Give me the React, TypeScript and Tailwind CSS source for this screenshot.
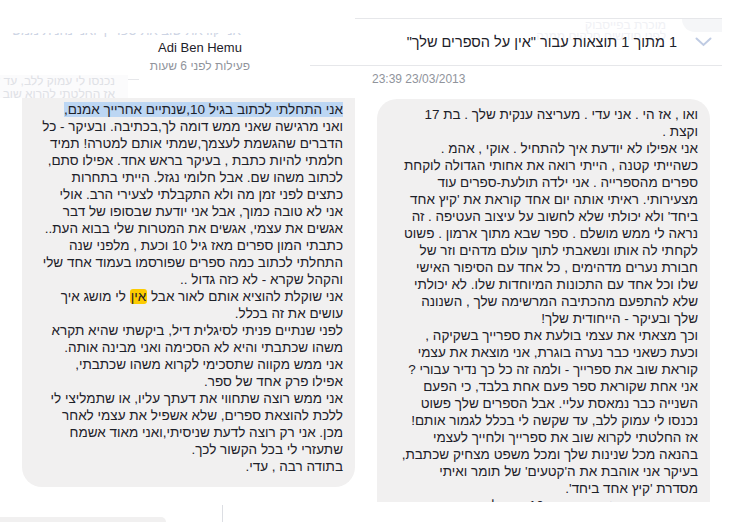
const leftLines = [
  "אני התחלתי לכתוב בגיל 10,שנתיים אחרייך אמנם,",
  "ואני מרגישה שאני ממש דומה לך,בכתיבה. ובעיקר - כל",
  "הדברים שהגשמת לעצמך,שמתי אותם למטרה! תמיד",
  "חלמתי להיות כתבת , בעיקר בראש אחד. אפילו סתם,",
  "לכתוב משהו שם. אבל חלומי נגזל. הייתי בתחרות",
  "כתצים לפני זמן מה ולא התקבלתי לצעירי הרב. אולי",
  "אני לא טובה כמוך, אבל אני יודעת שבסופו של דבר",
  "אגשים את עצמי, אגשים את המטרות שלי בבוא העת..",
  "כתבתי המון ספרים מאז גיל 10 וכעת , מלפני שנה",
  "התחלתי לכתוב כמה ספרים שפורסמו בעמוד אחד שלי",
  "והקהל שקרא - לא כזה גדול ..",
  "HIGHLIGHT",
  "עושים את זה בכלל.",
  "לפני שנתיים פניתי לסיגלית דיל, ביקשתי שהיא תקרא",
  "משהו שכתבתי והיא לא הסכימה ואני מבינה אותה.",
  "אני ממש מקווה שתסכימי לקרוא משהו שכתבתי,",
  "אפילו פרק אחד של ספר.",
  "אני ממש רוצה שתחווי את דעתך עליו, או שתמליצי לי",
  "ללכת להוצאת ספרים, שלא אשפיל את עצמי לאחר",
  "מכן. אני רק רוצה לדעת שניסיתי,ואני מאוד אשמח",
  "שתעזרי לי בכל הקשור לכך.",
  "בתודה רבה , עדי.",
];

const rightLines = [
  "ואו , אז הי . אני עדי . מעריצה ענקית שלך . בת 17",
  "וקצת .",
  "אני אפילו לא יודעת איך להתחיל . אוקי , אהמ .",
  "כשהייתי קטנה , הייתי רואה את אחותי הגדולה לוקחת",
  "ספרים מהספרייה . אני ילדה תולעת-ספרים עוד",
  "מצעירותי. ראיתי אותה יום אחד קוראת את 'קיץ אחד",
  "ביחד' ולא יכולתי שלא לחשוב על עיצוב העטיפה . זה",
  "נראה לי ממש מושלם . ספר שבא מתוך ארמון . פשוט",
  "לקחתי לה אותו ונשאבתי לתוך עולם מדהים וזר של",
  "חבורת נערים מדהימים , כל אחד עם הסיפור האישי",
  "שלו וכל אחד עם התכונות המיוחדות שלו. לא יכולתי",
  "שלא להתפעם מהכתיבה המרשימה שלך , השנונה",
  "שלך ובעיקר - הייחודית שלך!",
  "וכך מצאתי את עצמי בולעת את ספרייך בשקיקה ,",
  "וכעת כשאני כבר נערה בוגרת, אני מוצאת את עצמי",
  "קוראת שוב את ספרייך - ולמה זה כל כך נדיר עבורי ?",
  "אני אחת שקוראת ספר פעם אחת בלבד, כי הפעם",
  "השנייה כבר נמאסת עליי. אבל הספרים שלך פשוט",
  "נכנסו לי עמוק ללב, עד שקשה לי בכלל לגמור אותם!",
  "אז החלטתי לקרוא שוב את ספרייך ולחייך לעצמי",
  "בהנאה מכל שנינות שלך ומכל משפט מצחיק שכתבת,",
  "בעיקר אני אוהבת את ה'קטעים' של תומר ואיתי",
  "מסדרת 'קיץ אחד ביחד'.",
  "ואני כותבת מאז שהייתי בת 10 ועוד לא",
];

function Chevron() {
  return (
    <svg width="17" height="10" viewBox="0 0 17 10" fill="none">
      <path d="M1.5 1.5 L8.5 8 L15.5 1.5" stroke="#bfcbe3" strokeWidth="2" strokeLinecap="round" />
    </svg>
  );
}

export default function App() {
  return (
    <div className="relative flex h-[522px] w-[730px] overflow-hidden bg-white font-['Liberation_Sans',Arial,sans-serif] text-[#1d2129]">
      {/* left column */}
      <div className="flex w-[365px] flex-col">
        <div className="h-[81px] w-[310px] border-b border-[#e6e7ea] pt-[33px]">
          <div className="flex h-[4px] items-start overflow-hidden pl-[3px]">
            <span className="-mt-[9px] text-[13px] leading-[14px] text-[#c8265a]">"</span>
            <span className="-mt-[9px] ml-[4px] whitespace-nowrap text-[13px] leading-[14px] text-[#cdd4e4]" dir="rtl">
              אני קוראת שוב את ספרייך ואני נהנית ממש
            </span>
          </div>
        </div>
        <div className="-mt-[5px] h-[24px] w-[128px] overflow-hidden bg-[#fbfbfc] pr-[13px] text-[12px] leading-[13px] text-[#dfe1e6]" dir="rtl">
          <div className="whitespace-nowrap">נכנסו לי עמוק ללב, עד שקשה לי בכלל</div>
          <div className="whitespace-nowrap">אז החלטתי להרוא שוב את ספרייך</div>
        </div>

        <div className="ml-[22px] w-[333px] rounded-b-[20px] bg-[#f1f0f0] px-[12px] pb-[12px] pt-[3px] text-[13.5px] leading-[17px]" dir="rtl">
          {leftLines.map((line, i) =>
            line === "HIGHLIGHT" ? (
              <div key={i} className="whitespace-nowrap">
                אני שוקלת להוציא אותם לאור אבל{" "}
                <span className="rounded-[3px] bg-[#fccb00] px-[1px]">אין</span> לי מושג איך
              </div>
            ) : i === 0 ? (
              <div key={i} className="whitespace-nowrap">
                <span className="bg-[#bcd6f3]">{line}</span>
              </div>
            ) : (
              <div key={i} className="whitespace-nowrap">
                {line}
              </div>
            )
          )}
        </div>

        <div className="mt-[18px] flex h-[17px] items-end">
          <div className="h-[5px] w-[166px] rounded-tr-[14px] bg-[#f1f0f0]" />
          <div className="ml-[56px] h-full w-px bg-[#dcdee3]" />
        </div>
      </div>

      {/* right column */}
      <div className="flex flex-1 flex-col">
        <div className="-ml-[55px] mr-[8px] border-b border-[#e6e7ea]">
          <div className="relative ml-[45px] mt-[18px] flex h-[47px] items-center justify-end border-t border-[#e6e7ea] pr-[10px]">
            <div className="absolute right-0 top-0 h-[13px] w-[40px] rounded-bl-[20px] bg-[#f5f6f8]" />
            <div className="absolute right-[56px] top-[1px] text-[12px] leading-[11px] text-[#f0f1f5]" dir="rtl">
              <div>מוכרת בפייסבוק</div>
              <div>לפני חודשים חלקים ממנה</div>
            </div>
            <span className="relative text-[14.5px] leading-[18px]" dir="rtl">
              1 מתוך 1 תוצאות עבור "אין על הספרים שלך"
            </span>
            <span className="relative ml-[18px] flex">
              <Chevron />
            </span>
          </div>
        </div>

        <div className="pl-[7px] pt-[6px] text-[12px] leading-[14px] text-[#90949c]">23:39 23/03/2013</div>

        <div className="ml-[12px] mt-[13px] h-[403px] w-[333px] overflow-hidden rounded-t-[20px] bg-[#f1f0f0] px-[12px] pt-[7px] text-[13.5px] leading-[17px]" dir="rtl">
          {rightLines.map((line, i) => (
            <div key={i} className="whitespace-nowrap">
              {line}
            </div>
          ))}
        </div>
      </div>

      {/* profile hover card */}
      <div className="absolute left-[139px] top-[38px] h-[42px] w-[171px] bg-white">
        <div className="w-[122px] pt-[2px] text-center">
          <div className="text-[13px] leading-[16px] text-[#1d2129]">Adi Ben Hemu</div>
          <div className="mt-[2px] text-[12px] leading-[16px] text-[#90949c]" dir="rtl">
            פעילות לפני 6 שעות
          </div>
        </div>
      </div>
    </div>
  );
}
